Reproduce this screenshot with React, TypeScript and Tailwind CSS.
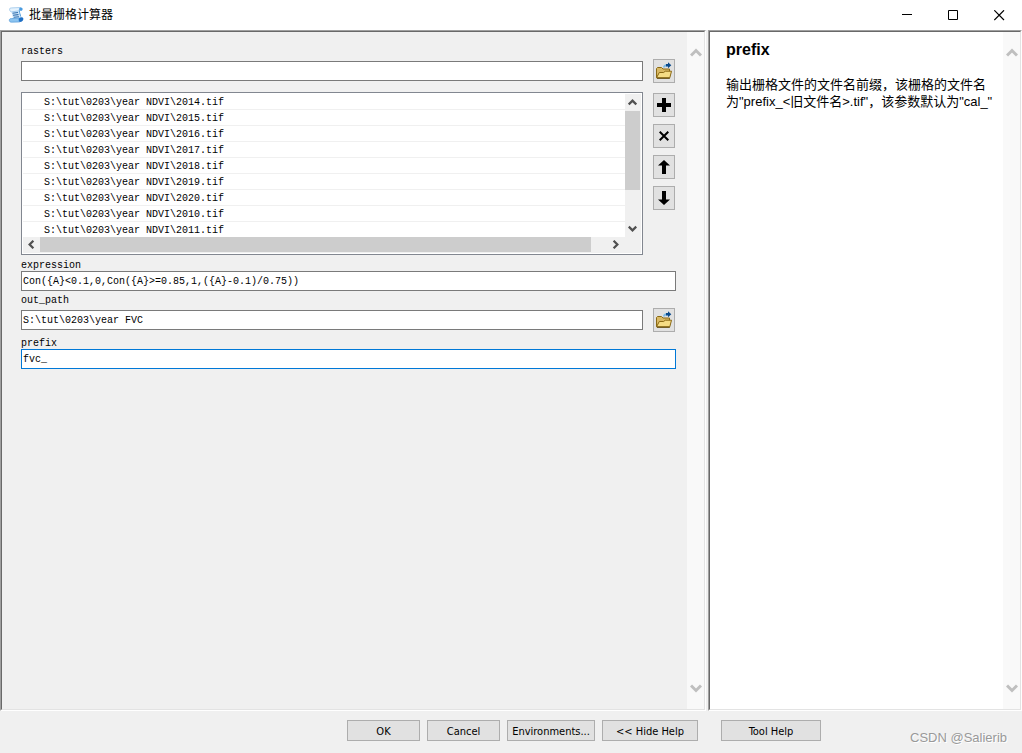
import React from "react";

const rasters = [
  "S:\\tut\\0203\\year NDVI\\2014.tif",
  "S:\\tut\\0203\\year NDVI\\2015.tif",
  "S:\\tut\\0203\\year NDVI\\2016.tif",
  "S:\\tut\\0203\\year NDVI\\2017.tif",
  "S:\\tut\\0203\\year NDVI\\2018.tif",
  "S:\\tut\\0203\\year NDVI\\2019.tif",
  "S:\\tut\\0203\\year NDVI\\2020.tif",
  "S:\\tut\\0203\\year NDVI\\2010.tif",
  "S:\\tut\\0203\\year NDVI\\2011.tif",
];

const ScriptIcon = () => (
  <svg width="16" height="16" viewBox="0 0 16 16" aria-hidden="true">
    <path d="M3.500 3.500 12 1.500c-1 3 .5 5.500 1 8 .2 1.500 0 3-.5 4.500L5 13.500c.5-3-1.500-6-1.500-10z" fill="#cfe6fa" />
    <path d="M1.600 2.400C1.400 1.200 2.600.9 3.600.9L12.500.5c-1.200.6-1.500 2-1 3.200l-8 1.200C2.300 4.900 1.700 3.500 1.600 2.400z" fill="#e6f3fd" stroke="#7ab2e2" strokeWidth=".6" />
    <path d="M12.500.5c1.800-.2 2.400 1 2 2.200-.4 1.100-1.500 1.400-3 1-.5-1.200-.2-2.600 1-3.200z" fill="#4a9be0" />
    <path d="m4.500 6.200 5.500-.7M5 8.200l5.500-.6M5.700 10.200l5.300-.5" stroke="#2f6cab" strokeWidth="1.100" />
    <path d="M11.500 3.800c-.3 2 .9 3.800 1.300 5.700" fill="none" stroke="#5ba3df" strokeWidth="1" />
    <path d="M1.300 13.200c0-1.200 1-1.600 2-1.600l8-.6c-.8 1.200-.5 3 .5 4l-8.500.2c-1.200 0-2-.8-2-2z" fill="#8cc4f0" stroke="#4791d3" strokeWidth=".6" />
    <path d="M11.300 11c1.500-1.200 4-1.200 4.100.8 0 1.700-1.500 3.300-3.600 3.200-1-1-1.300-2.800-.5-4z" fill="#1f6fc4" />
  </svg>
);

const FolderIcon = () => (
  <svg width="18" height="18" viewBox="0 0 18 18" aria-hidden="true">
    <path d="M1.500 15.500V6.500l1-1h4l1.500 1.500h6.500v8.500z" fill="#d9b964" stroke="#8a6914" />
    <path d="M1.500 15.800 4.300 10.500h4.400l1.500-1.300h6.300l-1.700 6.600z" fill="#f5dc84" stroke="#8a6914" />
    <path d="M2 16.300h12.800" stroke="#5e4708" />
    <path d="M9 5.500c.2-2 1.300-2.500 3.500-2.300" fill="none" stroke="#7dbbe6" strokeWidth="2" />
    <path d="M11 2h2V.2L16.300 3.200 13 6.300V4.400h-2z" fill="#0a4a8c" />
  </svg>
);

const Chevron = ({ d, size, className }: { d: string; size: number; className: string }) => (
  <svg width={size} height={size} viewBox="0 0 12 12" fill="none" stroke="currentColor" className={className} aria-hidden="true">
    <path d={d} />
  </svg>
);

const up = "M1 8.500 6 3.500l5 5";
const down = "M1 3.500 6 8.500l5-5";
const left = "M8.500 1 3.500 6l5 5";
const right = "M3.500 1 8.500 6l-5 5";

// Disabled vertical scrollbar at the side of a panel
const PanelScrollbar = () => (
  <div className="flex w-[17px] shrink-0 flex-col items-center justify-between bg-[#f9f9f9] py-[15px]">
    <button type="button" disabled aria-label="Scroll up">
      <Chevron d={up} size={12} className="stroke-[3px] text-[#bfbfbf]" />
    </button>
    <button type="button" disabled aria-label="Scroll down">
      <Chevron d={down} size={12} className="stroke-[3px] text-[#bfbfbf]" />
    </button>
  </div>
);

const Panel = ({ className, children }: { className: string; children: React.ReactNode }) => (
  <div className={`flex border border-t-[#a0a0a0] border-l-[#a0a0a0] border-r-white border-b-white ${className}`}>
    <div className="flex min-w-0 flex-1 border border-t-[#696969] border-l-[#696969] border-r-[#e3e3e3] border-b-[#e3e3e3]">
      {children}
      <PanelScrollbar />
    </div>
  </div>
);

const IconButton = ({ label, children }: { label: string; children: React.ReactNode }) => (
  <button
    type="button"
    aria-label={label}
    className="flex h-6 w-[22px] shrink-0 items-center justify-center border border-[#adadad] bg-[#e1e1e1]"
  >
    {children}
  </button>
);

const Label = ({ id, children }: { id: string; children: string }) => (
  <label htmlFor={id} className="block h-3 leading-[14px]">
    {children}
  </label>
);

const TextBox = ({ id, value, active }: { id: string; value: string; active?: boolean }) => (
  <input
    id={id}
    type="text"
    defaultValue={value}
    className={`h-5 w-full min-w-0 flex-1 border bg-white px-px outline-none ${
      active ? "border-[#0078d7]" : "border-[#7a7a7a]"
    }`}
  />
);

const DialogButton = ({ className, children }: { className: string; children: string }) => (
  <button
    type="button"
    className={`h-[21px] border border-[#adadad] bg-[#e1e1e1] pt-0.5 text-center leading-4 whitespace-nowrap ${className}`}
  >
    {children}
  </button>
);

const RasterList = () => (
  <div className="flex min-w-0 flex-1 flex-col border border-[#828790] bg-white p-px">
    <div className="flex h-[143px]">
      <ul className="min-w-0 flex-1 overflow-hidden">
        {rasters.map((raster) => (
          <li key={raster} className="h-4 border-b border-[#f0f0f0] pl-[21px] leading-[18px] whitespace-pre">
            {raster}
          </li>
        ))}
      </ul>
      <div className="flex w-4 flex-col items-center bg-[#f0f0f0] pr-px">
        <button type="button" aria-label="Scroll list up" className="flex h-[17px] items-center">
          <Chevron d={up} size={9} className="stroke-[3px] text-[#505050]" />
        </button>
        <div className="h-[79px] w-full bg-[#cdcdcd]" />
        <button type="button" aria-label="Scroll list down" className="mt-auto flex h-[17px] items-center">
          <Chevron d={down} size={9} className="stroke-[3px] text-[#505050]" />
        </button>
      </div>
    </div>
    <div className="flex h-4 items-start bg-[#f0f0f0] pr-[17px]">
      <button type="button" aria-label="Scroll list left" className="flex h-[15px] w-[17px] items-center justify-center">
        <Chevron d={left} size={9} className="stroke-[3px] text-[#505050]" />
      </button>
      <div className="h-[15px] w-11/12 shrink-0 bg-[#cdcdcd]" />
      <button type="button" aria-label="Scroll list right" className="ml-auto flex h-[15px] w-[17px] items-center justify-center">
        <Chevron d={right} size={9} className="stroke-[3px] text-[#505050]" />
      </button>
    </div>
  </div>
);

const TitleBar = () => (
  <header className="flex h-[30px] items-center bg-white pl-2">
    <ScriptIcon />
    <h1 className="ml-[5px] flex-1 font-['Liberation_Sans','Noto_Sans_CJK_SC',sans-serif] text-xs">批量栅格计算器</h1>
    <button type="button" aria-label="Minimize" className="flex h-7 w-[46px] items-center justify-center">
      <svg width="11" height="11" viewBox="0 0 11 11" stroke="#000" aria-hidden="true">
        <path d="M0 4.500h10" />
      </svg>
    </button>
    <button type="button" aria-label="Maximize" className="flex h-7 w-[46px] items-center justify-center">
      <svg width="11" height="11" viewBox="0 0 11 11" fill="none" stroke="#000" aria-hidden="true">
        <path d="M.5.5h9v9h-9z" />
      </svg>
    </button>
    <button type="button" aria-label="Close" className="flex h-7 w-[46px] items-center justify-center">
      <svg width="11" height="11" viewBox="0 0 11 11" stroke="#000" strokeWidth="1.200" aria-hidden="true">
        <path d="m.3.3 9.700 9.700m0-9.700L.3 10" />
      </svg>
    </button>
  </header>
);

const App = () => {
  return (
    <div className="flex min-h-screen flex-col bg-[#f0f0f0] text-black">
      <TitleBar />

      <main className="flex flex-1 gap-0.5">
        <Panel className="min-w-0 flex-1">
          <form className="min-w-0 flex-1 pt-[13px] pr-[11px] pl-[19px] font-['Liberation_Mono','Noto_Sans_CJK_SC',monospace] text-[10px]">
            <Label id="rasters">rasters</Label>
            <div className="mt-0.5 flex items-center gap-2.5 pr-px">
              <TextBox id="rasters" value="" />
              <IconButton label="Browse rasters">
                <FolderIcon />
              </IconButton>
            </div>
            <div className="mt-[9px] flex gap-2.5 pr-px">
              <RasterList />
              <div className="flex flex-col gap-[7px] pt-px">
                <IconButton label="Add">
                  <svg width="14" height="14" viewBox="0 0 14 14" aria-hidden="true">
                    <path d="M5 0h4v5h5v4H9v5H5V9H0V5h5z" />
                  </svg>
                </IconButton>
                <IconButton label="Remove">
                  <svg width="10" height="10" viewBox="0 0 10 10" stroke="#000" strokeWidth="2" aria-hidden="true">
                    <path d="m.7.7 8.600 8.600m0-8.600L.7 9.300" />
                  </svg>
                </IconButton>
                <IconButton label="Move up">
                  <svg width="12" height="14" viewBox="0 0 12 14" aria-hidden="true">
                    <path d="M6 0 12 5.500H8V14H4V5.500H0z" />
                  </svg>
                </IconButton>
                <IconButton label="Move down">
                  <svg width="12" height="14" viewBox="0 0 12 14" aria-hidden="true">
                    <path d="M6 14 0 8.500h4V0h4v8.500h4z" />
                  </svg>
                </IconButton>
              </div>
            </div>
            <div className="mt-1">
              <Label id="expression">expression</Label>
              <div className="flex">
                <TextBox id="expression" value="Con({A}<0.1,0,Con({A}>=0.85,1,({A}-0.1)/0.75))" />
              </div>
            </div>
            <div className="mt-[3px]">
              <Label id="out_path">out_path</Label>
              <div className="mt-0.5 flex items-center gap-2.5 pr-px">
                <TextBox id="out_path" value="S:\tut\0203\year FVC" />
                <IconButton label="Browse out_path">
                  <FolderIcon />
                </IconButton>
              </div>
            </div>
            <div className="mt-[5px]">
              <Label id="prefix">prefix</Label>
              <div className="flex">
                <TextBox id="prefix" value="fvc_" active />
              </div>
            </div>
          </form>
        </Panel>

        <Panel className="w-[314px] shrink-0 bg-white">
          <section className="min-w-0 flex-1 pt-2 pr-[7px] pl-4 font-['Liberation_Sans','Noto_Sans_CJK_SC',sans-serif]">
            <h2 className="text-base leading-5 font-bold">prefix</h2>
            <p className="mt-4 text-[13px] leading-[17px]">
              输出栅格文件的文件名前缀，该栅格的文件名为"prefix_&lt;旧文件名&gt;.tif"，该参数默认为"cal_"
            </p>
          </section>
        </Panel>
      </main>

      <footer className="flex h-[42px] gap-0.5 pt-[9px] font-['DejaVu_Sans_Condensed','Noto_Sans',sans-serif] text-[11px]">
        <div className="flex flex-1 justify-end gap-[7px] pr-2">
          <DialogButton className="w-[73px]">OK</DialogButton>
          <DialogButton className="w-[73px]">Cancel</DialogButton>
          <DialogButton className="w-[88px]">Environments...</DialogButton>
          <DialogButton className="w-24">&lt;&lt; Hide Help</DialogButton>
        </div>
        <div className="flex w-[314px] shrink-0 items-start justify-between pr-[15px] pl-[13px]">
          <DialogButton className="w-[100px]">Tool Help</DialogButton>
          <span className="pt-2 font-['Liberation_Sans',sans-serif] text-[13px] leading-5 text-[#999] [text-shadow:1px_1px_0_#fff]">
            CSDN @Salierib
          </span>
        </div>
      </footer>
    </div>
  );
};

export default App;
